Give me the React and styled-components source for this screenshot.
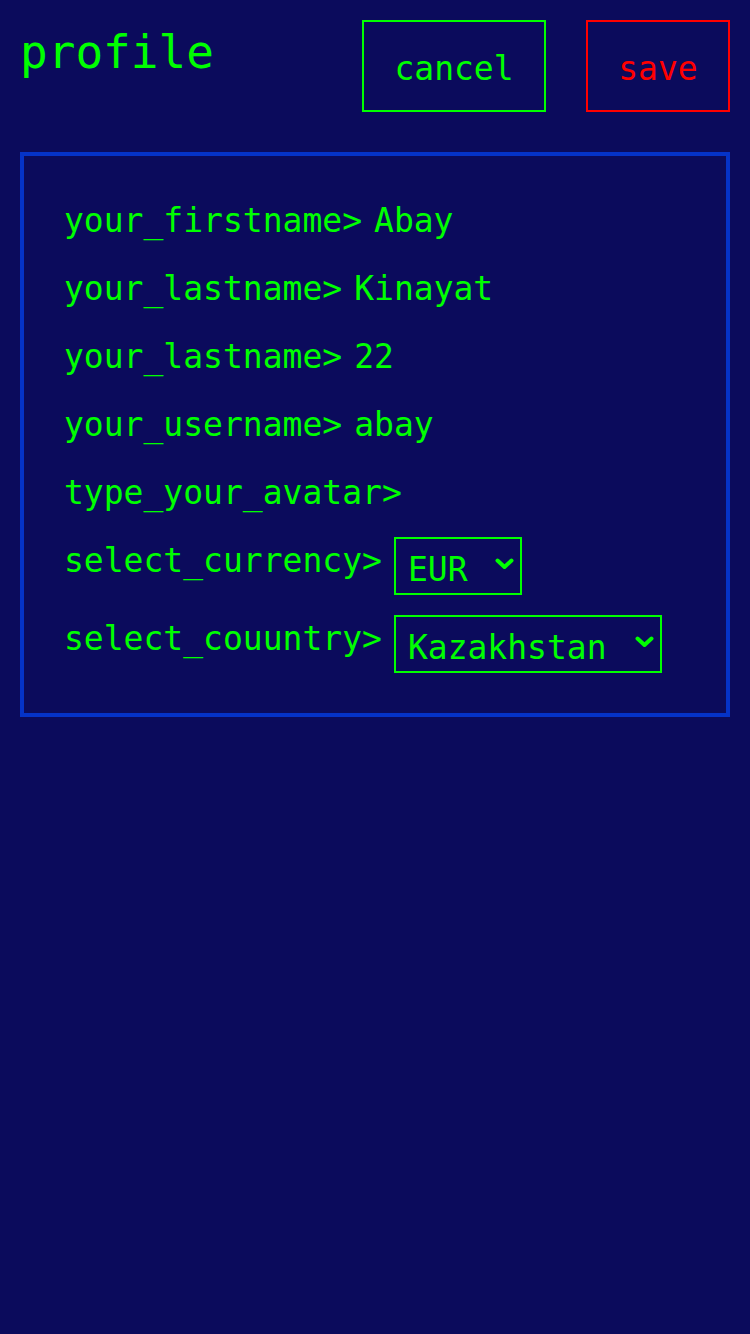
import React from "react";
import styled, { createGlobalStyle } from "styled-components";

const Global = createGlobalStyle`
  html, body {
    margin: 0;
    padding: 0;
    background: #0b0b5c;
  }
  body {
    min-height: 1334px;
    font-family: "DejaVu Sans Mono", "Liberation Mono", monospace;
    color: #00ff00;
  }
`;

const Page = styled.div`
  padding: 20px;
  background: #0b0b5c;
  min-height: 1294px;
`;

const Header = styled.header`
  display: flex;
  align-items: flex-start;
`;

const Title = styled.h1`
  margin: 0;
  flex: 1;
  font-size: 46px;
  font-weight: normal;
  line-height: 64px;
  color: #00ff00;
`;

const Button = styled.button`
  box-sizing: border-box;
  height: 92px;
  width: ${(p) => p.$w}px;
  padding: 4px 0 0;
  margin-left: ${(p) => p.$gap || 0}px;
  background: transparent;
  border: 2px solid ${(p) => p.$color};
  color: ${(p) => p.$color};
  font-family: "DejaVu Sans Mono", "Liberation Mono", monospace;
  font-size: 33px;
  cursor: pointer;
`;

const Panel = styled.section`
  margin-top: 40px;
  border: 4px solid #0533c8;
  padding: 41px 40px 40px;
  display: flex;
  flex-direction: column;
  gap: 20px;
`;

const Row = styled.div`
  display: flex;
  align-items: ${(p) => (p.$top ? "flex-start" : "center")};
  gap: 12px;
  min-height: 48px;
`;

const Label = styled.label`
  font-size: 33px;
  line-height: 48px;
  white-space: nowrap;
`;

const Value = styled.input`
  flex: 1;
  min-width: 0;
  background: transparent;
  border: none;
  outline: none;
  padding: 0;
  color: #00ff00;
  font-family: "DejaVu Sans Mono", "Liberation Mono", monospace;
  font-size: 33px;
  line-height: 48px;
`;

const SelectWrap = styled.div`
  position: relative;
  display: inline-flex;
`;

const Select = styled.select`
  appearance: none;
  -webkit-appearance: none;
  box-sizing: border-box;
  height: 58px;
  width: ${(p) => p.$w}px;
  padding: 6px 0 0 12px;
  background: transparent;
  border: 2px solid #00ff00;
  border-radius: 0;
  color: #00ff00;
  font-family: "DejaVu Sans Mono", "Liberation Mono", monospace;
  font-size: 33px;
  outline: none;
  option {
    background: #0b0b5c;
    color: #00ff00;
  }
`;

const Chevron = styled.svg`
  position: absolute;
  right: 8px;
  top: 20px;
  pointer-events: none;
`;

function ChevronIcon() {
  return (
    <Chevron width="19" height="14" viewBox="0 0 19 14">
      <path d="M2.5 3.5 L9.5 10 L16.5 3.5" fill="none" stroke="#00ff00" strokeWidth="4" strokeLinecap="round" strokeLinejoin="round" />
    </Chevron>
  );
}

const fields = [
  ["your_firstname>", "Abay"],
  ["your_lastname>", "Kinayat"],
  ["your_lastname>", "22"],
  ["your_username>", "abay"],
  ["type_your_avatar>", ""],
];

export default function App() {
  return (
    <>
      <Global />
      <Page>
        <Header>
          <Title>profile</Title>
          <Button $color="#00ff00" $w={184}>cancel</Button>
          <Button $color="#ff0000" $w={144} $gap={40}>save</Button>
        </Header>
        <Panel>
          {fields.map(([label, value], i) => (
            <Row key={i}>
              <Label>{label}</Label>
              <Value defaultValue={value} />
            </Row>
          ))}
          <Row $top>
            <Label>select_currency&gt;</Label>
            <SelectWrap>
              <Select $w={128} defaultValue="EUR">
                <option>EUR</option>
                <option>USD</option>
                <option>KZT</option>
              </Select>
              <ChevronIcon />
            </SelectWrap>
          </Row>
          <Row $top>
            <Label>select_couuntry&gt;</Label>
            <SelectWrap>
              <Select $w={268} defaultValue="Kazakhstan">
                <option>Kazakhstan</option>
                <option>Russia</option>
                <option>USA</option>
              </Select>
              <ChevronIcon />
            </SelectWrap>
          </Row>
        </Panel>
      </Page>
    </>
  );
}
